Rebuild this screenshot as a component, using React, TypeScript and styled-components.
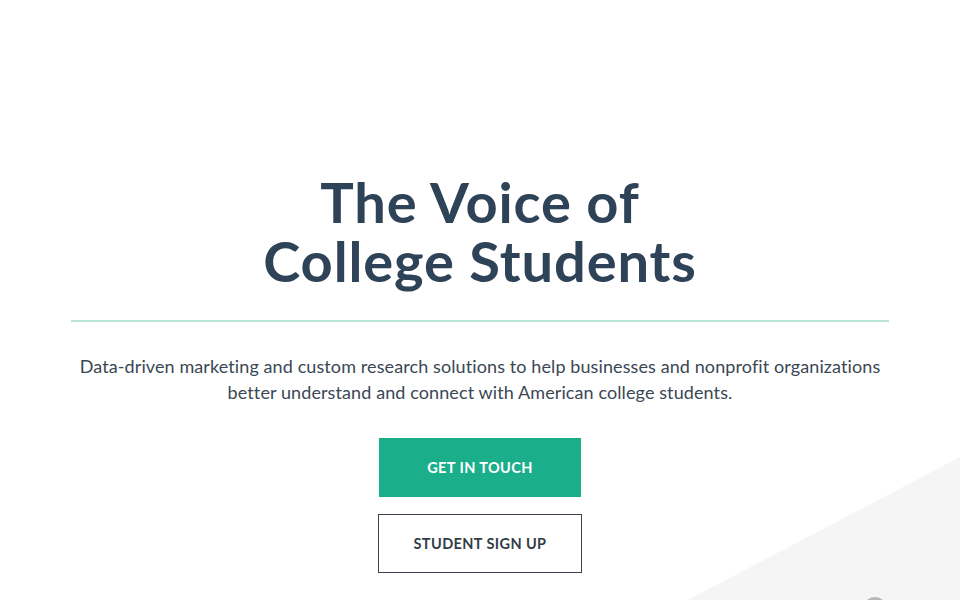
import styled, { createGlobalStyle } from "styled-components";

const GlobalStyle = createGlobalStyle`
  html, body {
    margin: 0;
    padding: 0;
    background: #ffffff;
  }
  body {
    font-family: Lato, "Noto Sans", sans-serif;
  }
`;

const Page = styled.div`
  position: relative;
  width: 960px;
  height: 600px;
  overflow: hidden;
  background: #ffffff;
`;

const Backdrop = styled.svg`
  position: absolute;
  left: 0;
  top: 0;
  width: 960px;
  height: 600px;
  pointer-events: none;
`;

const Hero = styled.section`
  position: relative;
  display: flex;
  flex-direction: column;
  align-items: center;
  padding: 172px 71px 0;
`;

const Title = styled.h1`
  margin: 0;
  font-size: 56px;
  line-height: 59px;
  font-weight: 700;
  color: #2e4358;
  text-align: center;
  letter-spacing: 0.9px;
`;

const Divider = styled.hr`
  align-self: stretch;
  margin: 30px 0 0;
  border: none;
  height: 2px;
  background: #b9e5d8;
`;

const Lead = styled.p`
  margin: 31px 0 0;
  font-size: 18px;
  line-height: 26px;
  letter-spacing: 0.1px;
  color: #3b4754;
  text-align: center;
`;

const Actions = styled.div`
  display: flex;
  flex-direction: column;
  align-items: center;
  gap: 17px;
  margin-top: 33px;
`;

const Button = styled.a<{ $variant: "solid" | "outline" }>`
  display: flex;
  align-items: center;
  justify-content: center;
  box-sizing: border-box;
  height: 59px;
  width: ${({ $variant }) => ($variant === "solid" ? "202px" : "204px")};
  font-size: 14.5px;
  font-weight: 700;
  letter-spacing: 0.4px;
  text-transform: uppercase;
  text-decoration: none;
  cursor: pointer;
  background: ${({ $variant }) => ($variant === "solid" ? "#1bae8b" : "#ffffff")};
  color: ${({ $variant }) => ($variant === "solid" ? "#ffffff" : "#333d48")};
  border: ${({ $variant }) => ($variant === "solid" ? "none" : "1px solid #3a434d")};
`;

const ScrollDot = styled.div`
  position: absolute;
  left: 863px;
  top: 597px;
  width: 24px;
  height: 24px;
  border-radius: 50%;
  background: #b4b8b8;
`;

export default function App() {
  return (
    <Page>
      <GlobalStyle />
      <Backdrop viewBox="0 0 960 600">
        <polygon points="688,600 960,457 960,600" fill="#f5f5f5" />
      </Backdrop>
      <Hero>
        <Title>
          The Voice of
          <br />
          College Students
        </Title>
        <Divider />
        <Lead>
          Data-driven marketing and custom research solutions to help businesses and nonprofit organizations
          <br />
          better understand and connect with American college students.
        </Lead>
        <Actions>
          <Button $variant="solid">Get in touch</Button>
          <Button $variant="outline">Student sign up</Button>
        </Actions>
      </Hero>
      <ScrollDot />
    </Page>
  );
}
